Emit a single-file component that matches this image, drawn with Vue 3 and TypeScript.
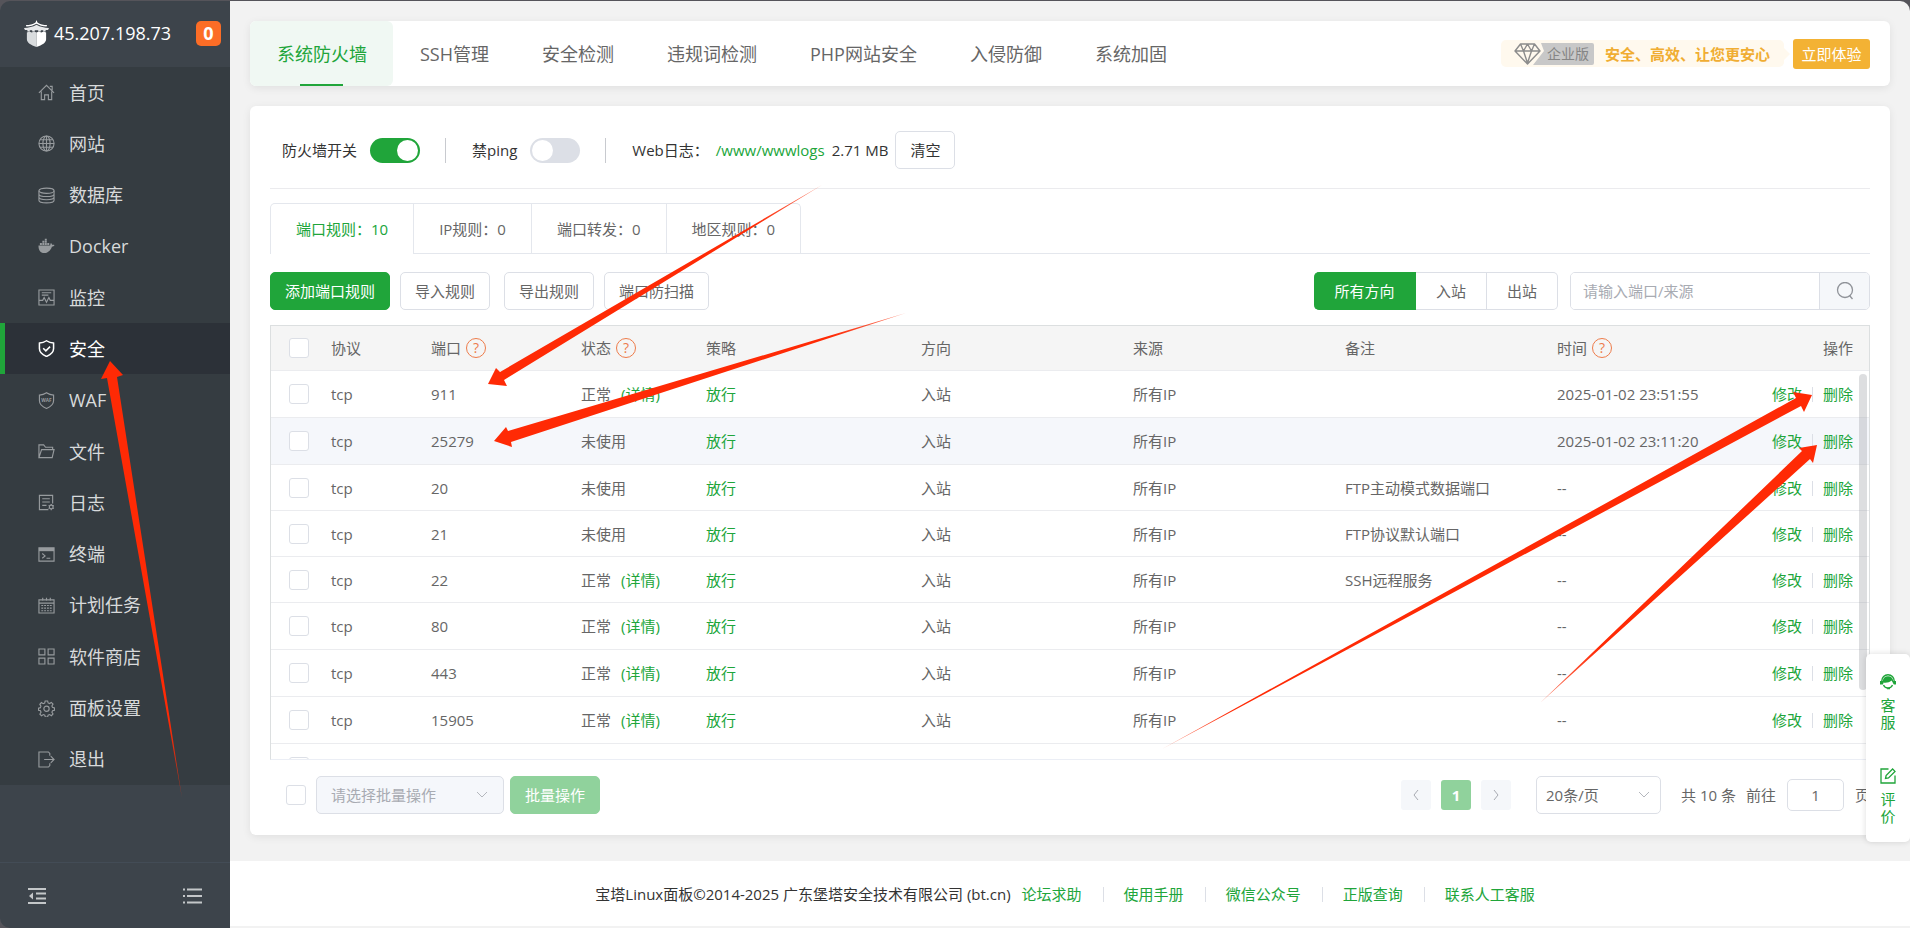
<script setup lang="ts">
import { ref } from 'vue'

interface MenuItem {
  label: string
  icon: string
  active?: boolean
}

interface Rule {
  port: string
  normal: boolean
  remark: string
  time: string
  hover?: boolean
}

const menu: MenuItem[] = [
  { label: '首页', icon: '<path d="M1 9.5 9 1.5l8 8M3.5 8v8.5h3.5v-5h4v5h3.500V8M12.500 2.500h2.500v4"/>' },
  { label: '网站', icon: '<circle cx="9" cy="9" r="8"/><ellipse cx="9" cy="9" rx="3.800" ry="8"/><path d="M9 1v16M1 9h16M2.200 5h13.600M2.200 13h13.600"/>' },
  { label: '数据库', icon: '<ellipse cx="9" cy="4" rx="8" ry="2.800"/><path d="M1 4v10c0 1.600 3.600 2.800 8 2.800s8-1.200 8-2.800V4M1 7.300c0 1.600 3.600 2.800 8 2.800s8-1.200 8-2.800M1 10.700c0 1.600 3.600 2.800 8 2.800s8-1.200 8-2.800"/>' },
  { label: 'Docker', icon: '<path class="solid" d="M.5 8h12.300c.3-1 .2-2 1-2.800.8.6 1.100 1.300 1.100 2 .9-.2 1.800-.1 2.600.3-.5 1.300-1.500 1.800-2.800 1.800C13.300 13.400 10.500 16 6.500 16 2.500 16 .5 13 .5 8zM2 5.400h2.100v2H2zM4.600 5.400h2.100v2H4.600zM7.200 5.400h2.100v2H7.200zM9.800 5.400h2.100v2H9.800zM4.600 3h2.100v2H4.600zM7.200 3h2.100v2H7.200zM7.200.8h2.100v1.800H7.200z"/>' },
  { label: '监控', icon: '<path d="M1 1h16v16H1zM4 4h10M4 6.500h7M1.500 12H5l1.500-3 2.500 5 2.500-5 1.500 3h4"/>' },
  { label: '安全', icon: '<path d="M9 .8c2.400 1.700 4.800 2.400 7.500 2.500V9c0 4-3.200 6.700-7.500 8.400C4.700 15.700 1.500 13 1.500 9V3.300C4.200 3.200 6.600 2.500 9 .8zM5.500 8.800l2.800 2.700 4.500-4.500"/>', active: true },
  { label: 'WAF', icon: '<path d="M9 .8c2.400 1.700 4.800 2.400 7.500 2.500V9c0 4-3.200 6.700-7.500 8.400C4.700 15.700 1.500 13 1.500 9V3.300C4.200 3.200 6.600 2.500 9 .8z"/><text x="9" y="11" text-anchor="middle" font-size="5" font-weight="700" fill="currentColor" stroke="none">WAF</text>' },
  { label: '文件', icon: '<path d="M1 15.500V2h5l2 2.500h7.500V7M1 15.500 3.800 7H17l-2 8.500z"/>' },
  { label: '日志', icon: '<path d="M15.500 10V1.500h-14v15H11M4.500 5h8M4.500 8.500h8M4.500 12h4.500"/><circle cx="14" cy="13.800" r="2"/><path d="M14 10.500v6.600M11.200 12.200l5.600 3.200M16.800 12.200l-5.600 3.200" stroke-dasharray="1.200 4.200"/>' },
  { label: '终端', icon: '<path d="M1 2h16v14H1z"/><path class="solid" d="M1 2h16v3.500H1z"/><path d="m4.500 8 3 2.500-3 2.500M9 13h4"/>' },
  { label: '计划任务', icon: '<path d="M1 3h16v14H1zM1 6.500h16M5 .8V4M9 .8V4M13 .8V4"/><path d="M3.500 9h11M3.500 11.800h11M3.500 14.500h11" stroke-width="1.200" stroke-dasharray="2 1"/>' },
  { label: '软件商店', icon: '<path d="M1 1h6.300v6.300H1zM10.700 1H17v6.300h-6.300zM1 10.700h6.300V17H1zM10.700 10.700H17V17h-6.300z"/>' },
  { label: '面板设置', icon: '<path d="m7.600 1-.5 2.200-1.600.7L3.600 2.700 1.900 4.600l1.200 1.900-.6 1.600-2 .5v2.200l2.100.6.6 1.500-1.200 2 1.700 1.700 2-1.200 1.500.7.500 1.900h2.500l.5-2 1.600-.6 1.900 1.200 1.700-1.800-1.200-1.900.7-1.600 2-.4V8.300l-2.100-.6-.6-1.400 1.200-2-1.800-1.700-1.900 1.200-1.500-.7-.5-2.100z"/><circle cx="9" cy="9.300" r="2.800"/>' },
  { label: '退出', icon: '<path d="M12.500 5V2.500L11 1H1v16h10l1.500-1.500V13M6.500 9H17M13.500 5.500 17 9l-3.500 3.500"/>' }
]

const topTabs = ['系统防火墙', 'SSH管理', '安全检测', '违规词检测', 'PHP网站安全', '入侵防御', '系统加固']
const ruleTabs = ['端口规则：10', 'IP规则：0', '端口转发：0', '地区规则：0']
const directions = ['所有方向', '入站', '出站']
const links = ['论坛求助', '使用手册', '微信公众号', '正版查询', '联系人工客服']

const rules: Rule[] = [
  { port: '911', normal: true, remark: '', time: '2025-01-02 23:51:55' },
  { port: '25279', normal: false, remark: '', time: '2025-01-02 23:11:20', hover: true },
  { port: '20', normal: false, remark: 'FTP主动模式数据端口', time: '--' },
  { port: '21', normal: false, remark: 'FTP协议默认端口', time: '--' },
  { port: '22', normal: true, remark: 'SSH远程服务', time: '--' },
  { port: '80', normal: true, remark: '', time: '--' },
  { port: '443', normal: true, remark: '', time: '--' },
  { port: '15905', normal: true, remark: '', time: '--' }
]

const arrows = [
  { tail: [182, 798], points: '110,361 123,375 117,377 182,798 107,378 101,379' },
  { tail: [822, 185], points: '488,384 496,368 500,372 822,185 504,380 507,386' },
  { tail: [906, 313], points: '494,441 506,427 508,431 906,313 511,442 512,447' },
  { tail: [1162, 749], points: '1812,395 1793,392 1796,398 1162,749 1801,406 1804,412' },
  { tail: [1540, 703], points: '1817,445 1799,448 1802,451 1540,703 1810,459 1813,463' }
]

const firewallOn = ref(true)
const pingOff = ref(false)
const page = ref('1')
const keyword = ref('')
</script>

<template>
  <div class="app">
    <aside class="sidebar">
      <header class="brand">
        <svg class="logo" viewBox="0 0 26 28" aria-hidden="true">
          <path d="M13 0 14 2.500C17 4.500 20 5 24 5.200L23.500 6.800C19 6.600 16 5.500 13 3.800 10 5.500 7 6.600 2.500 6.800L2 5.200C6 5 9 4.500 12 2.500z" fill="#fff" />
          <path d="M13 4.800C17 7 21 8 26 8.300L25 10.300H22.500V12H20V10.500H17.500V12H14.800V10.500H11.200V12H8.500V10.500H6V12H3.500V10.300H1L0 8.300C5 8 9 7 13 4.800z" fill="#e6e8ea" />
          <path d="M3 13 5.500 12 8 13 10.500 12 13 13V28C7 26 3 23.500 3 20z" fill="#d9dcde" />
          <path d="M13 13 15.500 12 18 13 20.500 12 23 13V20C23 23.500 19 26 13 28z" fill="#fff" />
        </svg>
        <span class="host">45.207.198.73</span>
        <span class="badge">0</span>
      </header>
      <nav class="menu">
        <a v-for="item in menu" :key="item.label" href="#" class="menu-item" :class="{ active: item.active }">
          <svg class="menu-icon" viewBox="0 0 18 18" aria-hidden="true" v-html="item.icon"></svg>
          <span>{{ item.label }}</span>
        </a>
      </nav>
      <footer class="side-foot">
        <button type="button" aria-label="收起菜单">
          <svg width="18" height="16" viewBox="0 0 18 16" fill="none" stroke="currentColor" stroke-width="2"><path d="M0 1h18M8 5.500h10M8 10.500h10M0 15h18" /><path d="M5 4.500v7L1 8z" fill="currentColor" stroke="none" /></svg>
        </button>
        <button type="button" aria-label="菜单列表">
          <svg width="19" height="16" viewBox="0 0 19 16" fill="none" stroke="currentColor" stroke-width="2"><path d="M0 1.500h2M4 1.500h15M0 8h2M4 8h15M0 14.500h2M4 14.500h15" /></svg>
        </button>
      </footer>
    </aside>

    <div class="main">
      <div class="content">
        <section class="card top-card">
          <nav class="top-tabs">
            <a v-for="(tab, i) in topTabs" :key="tab" href="#" class="top-tab" :class="{ active: i === 0 }">{{ tab }}</a>
          </nav>
          <div class="promo">
            <div class="promo-text">
              <svg class="diamond" viewBox="0 0 80 22" aria-hidden="true">
                <path d="M27 0h51a2 2 0 0 1 2 2v18a2 2 0 0 1-2 2H19L30 8z" fill="#c8c8c8" />
                <path d="M6.500 1h14L26 8 13.500 21 1 8zM1 8h25M9.500 8 13.500 20 17.500 8M6.500 1l3 7 4-7 4 7 3-7" fill="none" stroke="#8c8c8c" stroke-width="1.400" stroke-linejoin="round" />
              </svg>
              <span class="edition">企业版</span>
              <strong>安全、高效、让您更安心</strong>
            </div>
            <button type="button" class="try">立即体验</button>
          </div>
        </section>

        <section class="card body-card">
          <div class="switches">
            <label class="field">防火墙开关<input v-model="firewallOn" type="checkbox" class="switch" /></label>
            <span class="vline"></span>
            <label class="field">禁ping<input v-model="pingOff" type="checkbox" class="switch" /></label>
            <span class="vline"></span>
            <div class="weblog">
              <span>Web日志：</span>
              <a href="#">/www/wwwlogs</a>
              <span>2.71 MB</span>
              <button type="button" class="btn">清空</button>
            </div>
          </div>

          <nav class="rule-tabs">
            <a v-for="(tab, i) in ruleTabs" :key="tab" href="#" :class="{ active: i === 0 }">{{ tab }}</a>
          </nav>

          <div class="toolbar">
            <div class="tools">
              <button type="button" class="btn primary">添加端口规则</button>
              <button type="button" class="btn spaced">导入规则</button>
              <button type="button" class="btn">导出规则</button>
              <button type="button" class="btn">端口防扫描</button>
            </div>
            <div class="filters">
              <div class="group">
                <button v-for="(d, i) in directions" :key="d" type="button" :class="{ active: i === 0 }">{{ d }}</button>
              </div>
              <div class="search">
                <input v-model="keyword" type="text" placeholder="请输入端口/来源" aria-label="请输入端口/来源" />
                <button type="button" aria-label="搜索">
                  <svg width="18" height="18" viewBox="0 0 18 18" fill="none" stroke="currentColor" stroke-width="1.300"><circle cx="9" cy="8" r="7.500" /><path d="m13.500 13.500 3 3.500" /></svg>
                </button>
              </div>
            </div>
          </div>

          <div class="table-box">
            <table>
              <colgroup>
                <col class="w-check" /><col class="w-proto" /><col class="w-port" /><col class="w-state" />
                <col class="w-policy" /><col /><col /><col /><col /><col class="w-ops" />
              </colgroup>
              <thead>
                <tr>
                  <th class="check"><input type="checkbox" class="box" aria-label="全选" /></th>
                  <th>协议</th>
                  <th><span class="tip">端口<i>?</i></span></th>
                  <th><span class="tip">状态<i>?</i></span></th>
                  <th>策略</th>
                  <th>方向</th>
                  <th>来源</th>
                  <th>备注</th>
                  <th><span class="tip">时间<i>?</i></span></th>
                  <th class="ops">操作</th>
                </tr>
              </thead>
              <tbody>
                <tr v-for="r in rules" :key="r.port" :class="{ hover: r.hover, noted: r.remark }">
                  <td class="check"><input type="checkbox" class="box" :aria-label="r.port" /></td>
                  <td>tcp</td>
                  <td>{{ r.port }}</td>
                  <td v-if="r.normal"><span class="state">正常<a href="#">(详情)</a></span></td>
                  <td v-else>未使用</td>
                  <td><a href="#">放行</a></td>
                  <td>入站</td>
                  <td>所有IP</td>
                  <td>{{ r.remark }}</td>
                  <td>{{ r.time }}</td>
                  <td class="ops"><span class="actions"><a href="#">修改</a><a href="#">删除</a></span></td>
                </tr>
                <tr>
                  <td class="check"><input type="checkbox" class="box" aria-label="选择" /></td>
                  <td colspan="9"></td>
                </tr>
              </tbody>
            </table>
            <span class="thumb"></span>
          </div>

          <div class="bottom">
            <div class="batch">
              <input type="checkbox" class="box" aria-label="全选" />
              <span class="select batch-select">
                <select disabled aria-label="批量操作"><option>请选择批量操作</option></select>
                <svg viewBox="0 0 12 8" aria-hidden="true"><path d="m1 1 5 5 5-5" /></svg>
              </span>
              <button type="button" class="btn faded" disabled>批量操作</button>
            </div>
            <div class="pager">
              <button type="button" class="page" aria-label="上一页"><svg viewBox="0 0 8 12"><path d="M6 1 2 6l4 5" /></svg></button>
              <button type="button" class="page current">1</button>
              <button type="button" class="page" aria-label="下一页"><svg viewBox="0 0 8 12"><path d="m2 1 4 5-4 5" /></svg></button>
              <span class="select size-select">
                <select aria-label="每页条数"><option>20条/页</option></select>
                <svg viewBox="0 0 12 8" aria-hidden="true"><path d="m1 1 5 5 5-5" /></svg>
              </span>
              <span class="total">共 10 条</span>
              <label class="jump">前往<input v-model="page" type="text" />页</label>
            </div>
          </div>
        </section>
      </div>

      <footer class="page-foot">
        <span>宝塔Linux面板©2014-2025 广东堡塔安全技术有限公司 (bt.cn)</span>
        <nav><a v-for="l in links" :key="l" href="#">{{ l }}</a></nav>
      </footer>
    </div>

    <aside class="float">
      <a href="#">
        <svg width="16" height="16" viewBox="0 0 16 16" aria-hidden="true">
          <path d="M1.800 7a6.200 6.200 0 0 1 12.400 0" fill="none" stroke="currentColor" stroke-width="1.400" />
          <path d="M8 2.200c3 0 5 2 5.200 4.800H16v3.500h-2.200C13 9 12.500 8 11.500 6.500 9.500 8.500 6 9 3.500 8.500L3 10.500H0V7h2.800C3 4.200 5 2.200 8 2.200z" fill="currentColor" />
          <path d="M3.500 11c.8 2 2.500 3 4.500 3s3.700-1 4.500-3M7 14.500h3" fill="none" stroke="currentColor" stroke-width="1.300" />
        </svg>
        <span>客服</span>
      </a>
      <a href="#">
        <svg width="16" height="16" viewBox="0 0 16 16" fill="none" stroke="currentColor" stroke-width="1.300" aria-hidden="true">
          <path d="M8.500 1H1v14h14V7.500" /><path d="m5.500 10.500.6-3L12.600 1 15 3.400 8.500 10z" />
        </svg>
        <span>评价</span>
      </a>
    </aside>

    <svg class="arrows" viewBox="0 0 1910 928" aria-hidden="true">
      <defs>
        <radialGradient v-for="(a, i) in arrows" :id="'fade' + i" :key="i" gradientUnits="userSpaceOnUse" :cx="a.tail[0]" :cy="a.tail[1]" r="80">
          <stop offset="0" stop-color="#f92a05" stop-opacity="0.6" />
          <stop offset="1" stop-color="#ff2a05" />
        </radialGradient>
      </defs>
      <polygon v-for="(a, i) in arrows" :key="i" :points="a.points" :fill="'url(#fade' + i + ')'" />
    </svg>
  </div>
</template>

<style>
body {
  margin: 0;
  background: #55545a;
}
</style>

<style scoped>
* {
  box-sizing: border-box;
}
.app {
  position: relative;
  display: flex;
  min-height: 100vh;
  padding-top: 1px;
  background: #55545a;
  color: #666;
  font: 15px/20px "Open Sans", "Noto Sans CJK SC", sans-serif;
}
a {
  color: #20a53a;
  text-decoration: none;
}
button,
input,
select {
  margin: 0;
  font: inherit;
  color: inherit;
}
button {
  padding: 0;
  border: 0;
  background: none;
}

/* sidebar */
.sidebar {
  display: flex;
  flex: none;
  flex-direction: column;
  width: 230px;
  overflow: hidden;
  border-radius: 10px 0 0 10px;
  background: #3d444b;
}
.brand {
  display: flex;
  align-items: center;
  height: 66px;
  padding: 0 9px 2px 24px;
  color: #fff;
  font-size: 18px;
}
.logo {
  width: 25px;
  height: 27px;
  margin-right: 5px;
}
.badge {
  width: 25px;
  margin-left: auto;
  border-radius: 5px;
  background: #fc6d26;
  font-weight: 700;
  line-height: 25px;
  text-align: center;
}
.menu {
  display: flex;
  flex-direction: column;
  justify-content: space-between;
  min-height: 718px;
  background: #353c41;
}
.menu-item {
  display: flex;
  align-items: center;
  gap: 14px;
  height: 51px;
  padding-left: 33px;
  border-left: 5px solid transparent;
  color: #d8dadb;
  font-size: 18px;
}
.menu-item.active {
  border-color: #20a53a;
  background: #2c3138;
  color: #fff;
}
.menu-icon {
  width: 17px;
  height: 17px;
  fill: none;
  stroke: currentColor;
  stroke-width: 1.2;
  color: #979b9e;
}
.menu-icon :deep(.solid) {
  fill: currentColor;
  stroke: none;
}
.active .menu-icon {
  color: #fff;
  stroke-width: 1.6;
}
.side-foot {
  display: flex;
  align-items: center;
  justify-content: space-between;
  height: 66px;
  margin-top: auto;
  padding: 0 28px;
  border-top: 1px solid #434c56;
  color: #c4c7c9;
}
.side-foot svg {
  display: block;
}

/* main area */
.main {
  display: flex;
  flex: 1;
  flex-direction: column;
  min-width: 0;
  border-radius: 0 10px 0 0;
  background: #f2f2f2;
}
.content {
  display: flex;
  flex-direction: column;
  gap: 20px;
  padding: 20px;
}
.card {
  border-radius: 6px;
  background: #fff;
  box-shadow: 0 2px 8px rgba(0, 0, 0, 0.08);
}
.top-card {
  display: flex;
  justify-content: space-between;
  height: 65px;
  padding-right: 20px;
}
.top-tabs {
  display: flex;
}
.top-tab {
  display: flex;
  align-items: center;
  padding: 0 26px 0 27px;
  color: #666;
  font-size: 18px;
  white-space: nowrap;
}
.top-tab.active {
  position: relative;
  border-radius: 6px;
  background: #f0f8f3;
  color: #20a53a;
}
.top-tab.active::after {
  position: absolute;
  bottom: 0;
  left: 50px;
  width: 43px;
  height: 2px;
  background: #20a53a;
  content: "";
}
.promo {
  display: flex;
  align-items: center;
  gap: 9px;
}
.promo-text {
  position: relative;
  display: flex;
  align-items: center;
  height: 27px;
  padding: 0 14px 0 13px;
  border-radius: 5px;
  background: #fff9ee;
}
.promo-text::after {
  position: absolute;
  top: 8px;
  right: -6px;
  border: solid transparent;
  border-width: 6px 0 6px 6px;
  border-left-color: #fff9ee;
  content: "";
}
.diamond {
  width: 80px;
  height: 22px;
}
.edition {
  position: relative;
  width: 42px;
  margin: 0 16px 0 -47px;
  color: #858585;
  font-size: 14px;
}
.promo strong {
  color: #f0ad32;
}
.try {
  width: 77px;
  height: 30px;
  border-radius: 3px;
  background: #f3b234;
  color: #fff;
}

.body-card {
  padding: 0 20px 21px;
}
.switches {
  display: flex;
  align-items: center;
  height: 83px;
  padding: 6px 12px 0;
  border-bottom: 1px solid #ebebee;
  color: #333;
}
.field {
  display: flex;
  align-items: center;
  gap: 13px;
}
.switch {
  width: 50px;
  height: 25px;
  padding: 2px;
  border-radius: 13px;
  appearance: none;
  background: #dcdfe6;
}
.switch::before {
  display: block;
  width: 21px;
  height: 21px;
  border-radius: 50%;
  background: #fff;
  content: "";
}
.switch:checked {
  background: #20a53a;
}
.switch:checked::before {
  margin-left: auto;
}
.vline {
  width: 1px;
  height: 25px;
  margin: 0 26px 0 25px;
  background: #c8cacf;
}
.weblog {
  display: flex;
  align-items: center;
  gap: 7px;
}
.btn {
  height: 38px;
  padding: 0 14px;
  border: 1px solid #dcdfe6;
  border-radius: 5px;
  background: #fff;
}
.btn.primary {
  border-color: #20a53a;
  background: #20a53a;
  color: #fff;
}
.btn.faded {
  border-color: #90d29c;
  background: #90d29c;
  color: #fff;
}
.rule-tabs {
  display: flex;
  margin-top: 14px;
  box-shadow: inset 0 -1px #e4e7ed;
}
.rule-tabs a {
  padding: 15px 25px;
  border-top: 1px solid #e4e7ed;
  border-right: 1px solid #e4e7ed;
  color: #666;
}
.rule-tabs a:first-child {
  border-left: 1px solid #e4e7ed;
  border-radius: 5px 0 0 0;
}
.rule-tabs a:last-child {
  border-radius: 0 5px 0 0;
}
.rule-tabs .active {
  background: #fff;
  color: #20a53a;
}
.toolbar {
  display: flex;
  justify-content: space-between;
  margin: 18px 0 15px;
}
.tools {
  display: flex;
  gap: 10px;
}
.spaced {
  margin-right: 4px;
}
.filters {
  display: flex;
  gap: 12px;
}
.group {
  display: flex;
}
.group button {
  width: 71px;
  border: 1px solid #dcdfe6;
  border-left: 0;
  background: #fff;
}
.group .active {
  width: 102px;
  border-color: #20a53a;
  border-radius: 5px 0 0 5px;
  background: #20a53a;
  color: #fff;
}
.group button:last-child {
  border-radius: 0 5px 5px 0;
}
.search {
  display: flex;
  width: 300px;
  height: 38px;
  overflow: hidden;
  border: 1px solid #dcdfe6;
  border-radius: 5px;
}
.search input {
  flex: 1;
  min-width: 0;
  padding: 0 12px;
  border: 0;
}
.search input::placeholder {
  color: #a8abb2;
}
.search button {
  display: grid;
  width: 50px;
  place-items: center;
  border-left: 1px solid #dcdfe6;
  background: #f5f7fa;
  color: #909399;
}

/* table */
.table-box {
  position: relative;
  height: 435px;
  overflow: hidden;
  border: 1px solid #dcdfe0;
  border-bottom-color: #ebeef5;
}
table {
  width: 100%;
  border-spacing: 0;
  table-layout: fixed;
}
.w-check {
  width: 50px;
}
.w-proto {
  width: 100px;
}
.w-port {
  width: 150px;
}
.w-state {
  width: 125px;
}
.w-policy {
  width: 215px;
}
.w-ops {
  width: 110px;
}
th,
td {
  height: 47px;
  padding: 0 10px;
  border-bottom: 1px solid #ebecef;
  font-weight: 400;
  text-align: left;
  white-space: nowrap;
}
th {
  height: 45px;
  background: #f5f5f5;
}
.noted td {
  height: 46px;
}
.hover td {
  background: #f5f7fb;
}
.check {
  padding: 0 0 0 18px;
}
.ops {
  padding: 0 16px 0 0;
  text-align: right;
}
.box {
  display: block;
  width: 20px;
  height: 20px;
  border: 1px solid #dcdfe6;
  border-radius: 3px;
  appearance: none;
  background: #fff;
}
.tip {
  display: flex;
  align-items: center;
  gap: 5px;
}
.tip i {
  width: 20px;
  height: 20px;
  border: 1px solid #ee7c4b;
  border-radius: 50%;
  color: #ee7c4b;
  font-size: 14px;
  font-style: normal;
  line-height: 18px;
  text-align: center;
}
.state {
  display: flex;
  gap: 10px;
}
.actions {
  display: inline-flex;
}
.actions a + a {
  margin-left: 10px;
  padding-left: 11px;
  background: linear-gradient(#dcdfe6, #dcdfe6) 0 3px / 1px 15px no-repeat;
}
.thumb {
  position: absolute;
  top: 48px;
  right: 2px;
  width: 8px;
  height: 316px;
  border-radius: 4px;
  background: rgba(144, 147, 153, 0.3);
}

/* below the table */
.bottom {
  display: flex;
  justify-content: space-between;
  margin-top: 16px;
}
.batch,
.pager {
  display: flex;
  align-items: center;
}
.batch {
  padding-left: 16px;
}
.select {
  position: relative;
  display: block;
}
.select select {
  width: 100%;
  height: 38px;
  padding: 0 9px;
  border: 1px solid #dcdfe6;
  border-radius: 5px;
  appearance: none;
  background: #fff;
  opacity: 1;
}
.select svg {
  position: absolute;
  top: 15px;
  right: 11px;
  width: 12px;
  height: 8px;
  fill: none;
  stroke: #b4b7bd;
}
.batch-select {
  width: 188px;
  margin: 0 6px 0 10px;
}
.batch-select select {
  padding: 0 14px;
  background: #f5f7fb;
  color: #a8abb2;
}
.batch-select svg {
  right: 16px;
}
.page {
  display: grid;
  width: 30px;
  height: 30px;
  margin-right: 10px;
  place-items: center;
  border-radius: 3px;
  background: #f5f7fa;
}
.page svg {
  width: 8px;
  height: 12px;
  fill: none;
  stroke: #a8abb2;
}
.page.current {
  background: #90d29c;
  color: #fff;
  font-weight: 700;
}
.size-select {
  width: 125px;
  margin-left: 15px;
}
.total {
  margin: 0 10px 0 20px;
}
.jump {
  display: flex;
  align-items: center;
  gap: 11px;
}
.jump input {
  width: 57px;
  height: 32px;
  border: 1px solid #dcdfe6;
  border-radius: 5px;
  text-align: center;
}

.page-foot {
  display: flex;
  align-items: center;
  justify-content: center;
  gap: 11px;
  height: 65px;
  margin: auto 0 2px;
  padding-right: 10px;
  background: #fff;
  color: #333;
}
.page-foot nav {
  display: flex;
}
.page-foot a + a {
  margin-left: 21px;
  padding-left: 21px;
  background: linear-gradient(#dcdfe6, #dcdfe6) 0 3px / 1px 15px no-repeat;
}

/* floating service panel */
.float {
  position: absolute;
  right: 0;
  bottom: 86px;
  display: flex;
  flex-direction: column;
  gap: 37px;
  width: 44px;
  height: 188px;
  padding-top: 20px;
  border-radius: 5px;
  background: #fff;
  box-shadow: 0 0 6px rgba(0, 0, 0, 0.14);
}
.float a {
  display: flex;
  flex-direction: column;
  gap: 7px;
  align-items: center;
  line-height: 17px;
}
.float span {
  width: 15px;
}
.arrows {
  position: absolute;
  top: 0;
  left: 0;
  width: 100%;
  pointer-events: none;
}
</style>
